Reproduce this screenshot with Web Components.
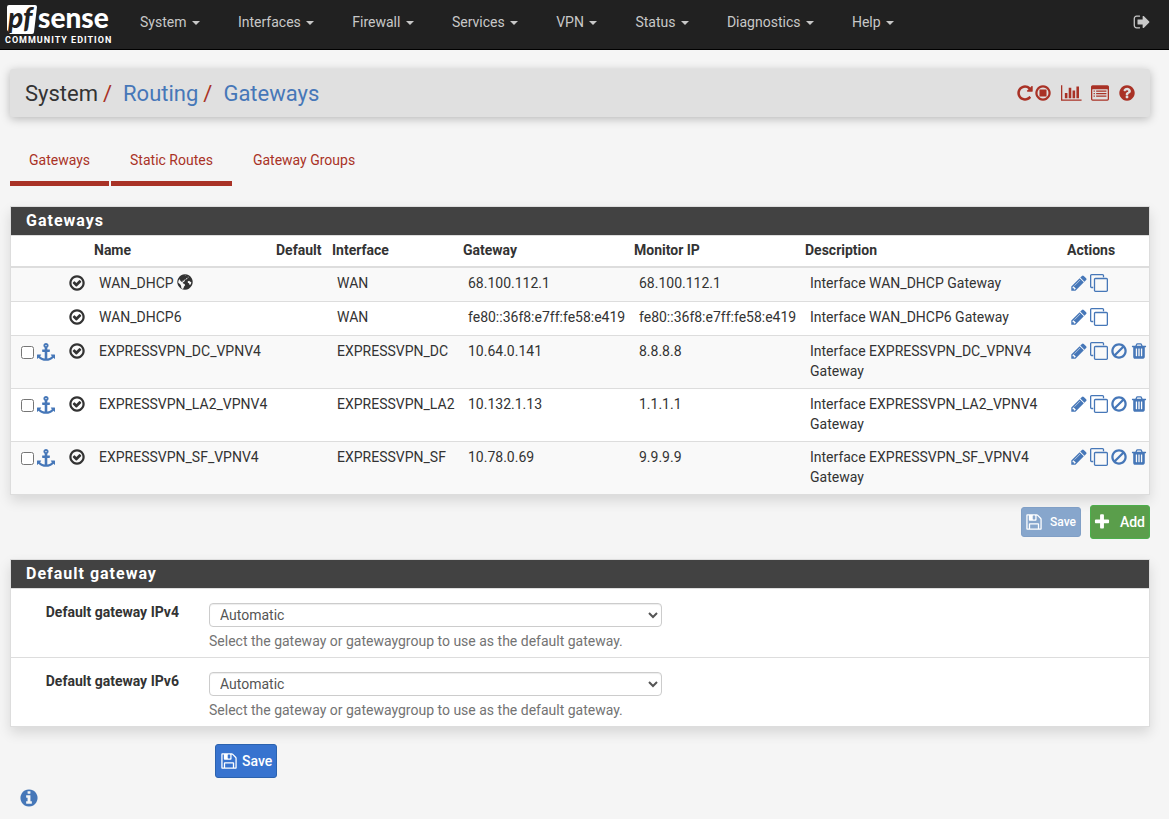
<!DOCTYPE html>
<html lang="en">
<head>
<meta charset="utf-8">
<title>System: Routing: Gateways</title>
<style>
  body { margin: 0; background: #f5f5f5; color: #333; font: 14px/20px Roboto, sans-serif; }
</style>
</head>
<body>
<pf-page></pf-page>

<script>
const RING = 'M1664 896q0 209-103 385.5t-279.5 279.5-385.5 103-385.5-103-279.5-279.5-103-385.5 103-385.5 279.5-279.5 385.5-103 385.5 103 279.5 279.5 103 385.5z';
const HOLE = 'M1440 896q0-148-73-273t-198-198-273-73-273 73-198 198-73 273 73 273 198 198 273 73 273-73 198-198 73-273z';
const ICONS = {
  repeat: 'M1664 256v448q0 26-19 45t-45 19h-448q-42 0-59-40-17-39 14-69l138-138q-148-137-349-137-104 0-198.5 40.5t-163.5 109.5-109.5 163.5-40.5 198.5 40.5 198.5 109.5 163.5 163.5 109.5 198.5 40.5q119 0 225-52t179-147q7-10 23-12 15 0 25 9l137 138q9 8 9.5 20.5t-7.5 22.5q-109 132-264 204.5t-327 72.5q-156 0-298-61t-245-164-164-245-61-298 61-298 164-245 245-164 298-61q147 0 284.5 55.5t244.5 156.5l130-129q29-31 70-14 39 17 39 59z',
  stop: RING + HOLE + 'M576 544h640q32 0 32 32v640q0 32-32 32h-640q-32 0-32-32v-640q0-32 32-32z',
  chart: 'M640 896v512h-256v-512h256zm384-512v1024h-256v-1024h256zm1024 1152v128h-2048v-1536h128v1408h1920zm-640-896v768h-256v-768h256zm384-384v1152h-256v-1152h256z',
  list: 'M160 128h1472q66 0 113 47t47 113v1216q0 66-47 113t-113 47h-1472q-66 0-113-47t-47-113v-1216q0-66 47-113t113-47zM128 544v960q0 32 32 32h1472q32 0 32-32v-960q0-32-32-32h-1472q-32 0-32 32zM256 640h128v128h-128zM512 640h1024v128h-1024zM256 896h128v128h-128zM512 896h1024v128h-1024zM256 1152h128v128h-128zM512 1152h1024v128h-1024z',
  help: 'M1024 1376v-192q0-14-9-23t-23-9h-192q-14 0-23 9t-9 23v192q0 14 9 23t23 9h192q14 0 23-9t9-23zm256-672q0-88-55.5-163t-138.5-116-170-41q-243 0-371 213-15 24 8 42l132 100q7 6 19 6 16 0 25-12 53-68 86-92 34-24 86-24 48 0 85.5 26t37.5 59q0 38-20 61t-68 45q-63 28-115.5 86.5t-52.5 125.5v36q0 14 9 23t23 9h192q14 0 23-9t9-23q0-19 21.5-49.5t54.5-49.5q32-18 49-28.5t46-35 44.5-48 28-60.5 12.5-81z' + RING,
  info: 'M1152 1376v-160q0-14-9-23t-23-9h-96v-512q0-14-9-23t-23-9h-320q-14 0-23 9t-9 23v160q0 14 9 23t23 9h96v320h-96q-14 0-23 9t-9 23v160q0 14 9 23t23 9h448q14 0 23-9t9-23zm-128-896v-160q0-14-9-23t-23-9h-192q-14 0-23 9t-9 23v160q0 14 9 23t23 9h192q14 0 23-9t9-23z' + RING,
  check: 'M1299 813l-422 422q-19 19-45 19t-45-19l-294-294q-19-19-19-45t19-45l102-102q19-19 45-19t45 19l147 147 275-275q19-19 45-19t45 19l102 102q19 19 19 45t-19 45z' + HOLE + RING,
  globe: RING + 'M860 270l230 30 160 70-50 110-150 20-60 110-130 40-60 130-120-30-50 80 60 70-70 30-190-150-40-150-110 60q-70 130-50 290l180 130 90 170 40 240 120 70 90-60 40-170 120-130-60-130-170-70 30-110 150-90 60-150 140-60 100-120 110-20-80-120-130-60-150-50zM1240 800l-90 80 50 110 100 40 30 120 70 40 90-130 30-170-120-30-90-80z',
  anchor: 'M960 256q0-26-19-45t-45-19-45 19-19 45 19 45 45 19 45-19 19-45zm832 928v352q0 22-20 30-8 2-12 2-13 0-23-9l-93-93q-119 143-318.5 226.5t-429.5 83.5-429.5-83.5-318.5-226.5l-93 93q-9 9-23 9-4 0-12-2-20-8-20-30v-352q0-14 9-23t23-9h352q22 0 30 20 8 19-7 35l-100 100q67 91 189.5 153.5t271.5 82.5v-647h-192q-26 0-45-19t-19-45v-128q0-26 19-45t45-19h192v-163q-58-34-93-92.5t-35-128.5q0-106 75-181t181-75 181 75 75 181q0 70-35 128.5t-93 92.5v163h192q26 0 45 19t19 45v128q0 26-19 45t-45 19h-192v647q149-20 271.5-82.5t189.5-153.5l-100-100q-15-16-7-35 8-20 30-20h352q14 0 23 9t9 23z',
  pencil: 'M491 1536l91-91-235-235-91 91v107h128v128h107zm523-928q0-22-22-22-10 0-17 7l-542 542q-7 7-7 17 0 22 22 22 10 0 17-7l542-542q7-7 7-17zm-54-192l416 416-832 832h-416v-416zm683 96q0 53-37 90l-166 166-416-416 166-165q36-38 90-38 53 0 91 38l235 234q37 39 37 91z',
  clone: 'M1664 1632v-1088q0-13-9.5-22.5t-22.5-9.5h-1088q-13 0-22.5 9.5t-9.5 22.5v1088q0 13 9.5 22.5t22.5 9.5h1088q13 0 22.5-9.5t9.5-22.5zm128-1088v1088q0 66-47 113t-113 47h-1088q-66 0-113-47t-47-113v-1088q0-66 47-113t113-47h1088q66 0 113 47t47 113zm-384-384v160h-128v-160q0-13-9.5-22.5t-22.5-9.5h-1088q-13 0-22.5 9.5t-9.5 22.5v1088q0 13 9.5 22.5t22.5 9.5h160v128h-160q-66 0-113-47t-47-113v-1088q0-66 47-113t113-47h1088q66 0 113 47t47 113z',
  ban: 'M1440 893q0-161-87-295l-754 753q137 89 297 89 111 0 211.5-43.5t173.5-116.5 116-174.5 43-212.5zm-999 299l755-754q-135-91-300-91-148 0-273 73t-198 199-73 274q0 162 89 299zm1223-299q0 157-61 300t-163.5 246-245 164-298.5 61-298.5-61-245-164-163.5-246-61-300 61-299.5 163.5-245.5 245-164 298.5-61 298.5 61 245 164 163.5 245.5 61 299.5z',
  trash: 'M704 1376v-704q0-14-9-23t-23-9h-64q-14 0-23 9t-9 23v704q0 14 9 23t23 9h64q14 0 23-9t9-23zm256 0v-704q0-14-9-23t-23-9h-64q-14 0-23 9t-9 23v704q0 14 9 23t23 9h64q14 0 23-9t9-23zm256 0v-704q0-14-9-23t-23-9h-64q-14 0-23 9t-9 23v704q0 14 9 23t23 9h64q14 0 23-9t9-23zm-544-992h448l-48-117q-7-9-17-11h-317q-10 2-17 11zm928 32v64q0 14-9 23t-23 9h-96v948q0 83-47 143.5t-113 60.5h-832q-66 0-113-58.5t-47-141.5v-952h-96q-14 0-23-9t-9-23v-64q0-14 9-23t23-9h309l70-167q15-37 54-63t79-26h320q40 0 79 26t54 63l70 167h309q14 0 23 9t9 23z',
  save: 'M512 1536h768v-384h-768v384zm896 0h128v-896q0-14-10-38.5t-20-34.5l-281-281q-10-10-34-20t-39-10v416q0 40-28 68t-68 28h-576q-40 0-68-28t-28-68v-416h-128v1280h128v-416q0-40 28-68t68-28h832q40 0 68 28t28 68v416zm-384-928v-320q0-13-9.5-22.5t-22.5-9.5h-192q-13 0-22.5 9.5t-9.5 22.5v320q0 13 9.5 22.5t22.5 9.5h192q13 0 22.5-9.5t9.5-22.5zm640 32v928q0 40-28 68t-68 28h-1344q-40 0-68-28t-28-68v-1344q0-40 28-68t68-28h928q40 0 88 20t76 48l280 280q28 28 48 76t20 88z',
  plus: 'M1600 736v192q0 40-28 68t-68 28h-416v416q0 40-28 68t-68 28h-192q-40 0-68-28t-28-68v-416h-416q-40 0-68-28t-28-68v-192q0-40 28-68t68-28h416v-416q0-40 28-68t68-28h192q40 0 68 28t28 68v416h416q40 0 68 28t28 68z',
  signout: 'M704 1440q0 4 1 20t.5 26.5-3 23.5-10 19.5-20.5 6.5h-320q-119 0-203.5-84.5t-84.5-203.5v-704q0-119 84.5-203.5t203.5-84.5h320q13 0 22.5 9.5t9.5 22.5q0 4 1 20t.5 26.5-3 23.5-10 19.5-20.5 6.5h-320q-66 0-113 47t-47 113v704q0 66 47 113t113 47h312l11.5 1 11.5 3 8 5.5 7 9 2 13.5zm928-544q0 26-19 45l-544 544q-19 19-45 19t-45-19-19-45v-288h-448q-26 0-45-19t-19-45v-384q0-26 19-45t45-19h448v-288q0-26 19-45t45-19 45 19l544 544q19 19 19 45z'
};

/* Attaches an open shadow root filled with the given styles and markup. */
function render(el, css, html) {
  if (!el.shadowRoot) el.attachShadow({ mode: 'open' });
  el.shadowRoot.innerHTML = `<style>*{box-sizing:border-box}a{text-decoration:none}${css}</style>${html}`;
}

customElements.define('pf-icon', class extends HTMLElement {
  connectedCallback() {
    const name = this.getAttribute('name');
    const w = name === 'chart' ? 2048 : 1792;
    render(this, `
      :host { display: block; height: 18px; flex: none; }
      svg { display: block; height: 100%; fill: currentColor; fill-rule: evenodd; }`,
      `<svg viewBox="0 0 ${w} 1792" aria-hidden="true"><path d="${ICONS[name]}"/></svg>`);
  }
});

customElements.define('pf-logo', class extends HTMLElement {
  connectedCallback() {
    render(this, `
      :host { display: block; }
      a, svg { display: block; }
      text { font-family: Lato, sans-serif; font-weight: 900; }
      .edition { font: 700 9px Roboto, sans-serif; letter-spacing: 1px; }`,
      `<a href="#" aria-label="Home"><svg width="116" height="49" viewBox="0 0 116 49">
        <path d="M9 5h26q2 0 2 2l-3 25q0 2-2 2H10L7 30V7q0-2 2-2z" fill="#fff"/>
        <text x="8" y="28" font-size="28" font-style="italic" fill="#212121">pf</text>
        <text x="38" y="28" font-size="28" fill="#fff">sense</text>
        <text class="edition" x="5" y="43" fill="#fff">COMMUNITY EDITION</text>
      </svg></a>`);
  }
});

customElements.define('pf-nav-item', class extends HTMLElement {
  connectedCallback() {
    render(this, `
      :host { display: block; }
      a { display: block; padding: 12px 19px 17px; color: #c8c8c8; white-space: nowrap; }
      i { display: inline-block; vertical-align: middle; margin-left: 2px; border: 4px solid transparent; border-top-color: currentColor; border-bottom: 0; }`,
      `<a href="#"><slot></slot> <i></i></a>`);
  }
});

customElements.define('pf-navbar', class extends HTMLElement {
  connectedCallback() {
    const items = ['System', 'Interfaces', 'Firewall', 'Services', 'VPN', 'Status', 'Diagnostics', 'Help'];
    render(this, `
      :host { display: block; background: #212121; border-bottom: 1px solid #000; }
      nav { display: flex; align-items: flex-start; }
      pf-logo { width: 121px; }
      .out { margin-left: auto; padding: 13px 18px 0 0; color: #c8c8c8; }`,
      `<nav><pf-logo></pf-logo>${items.map(t => `<pf-nav-item>${t}</pf-nav-item>`).join('')}
       <a class="out" href="#" aria-label="Log out"><pf-icon name="signout"></pf-icon></a></nav>`);
  }
});

customElements.define('pf-header', class extends HTMLElement {
  connectedCallback() {
    render(this, `
      :host { display: flex; align-items: center; justify-content: space-between; padding: 10px 14px 8px 15px;
        background: #e0e0e0; border-radius: 3px; box-shadow: 0 2px 10px rgba(0,0,0,.25); }
      ol { display: flex; margin: 0; padding: 0; list-style: none; font-size: 22px; line-height: 30px; }
      li + li::before { content: "/"; color: #a93226; padding: 0 11px 0 5px; }
      ol a { color: #4677b8; }
      .tools { display: flex; align-items: center; padding-bottom: 2px; color: #a93226; }
      .tools a { display: block; color: inherit; }
      .chart, .list, .help { margin-left: 9px; }`,
      `<ol><li>System</li><li><a href="#">Routing</a></li><li><a href="#">Gateways</a></li></ol>
       <div class="tools">
         <a href="#" aria-label="Restart service"><pf-icon name="repeat"></pf-icon></a>
         <a href="#" aria-label="Stop service"><pf-icon name="stop"></pf-icon></a>
         <a href="#" class="chart" aria-label="Monitoring"><pf-icon name="chart"></pf-icon></a>
         <a href="#" class="list" aria-label="Log entries"><pf-icon name="list"></pf-icon></a>
         <a href="#" class="help" aria-label="Help"><pf-icon name="help"></pf-icon></a>
       </div>`);
  }
});

customElements.define('pf-tabs', class extends HTMLElement {
  connectedCallback() {
    render(this, `
      :host { display: flex; gap: 2px; }
      a { padding: 9px 19px 11px; border-bottom: 5px solid transparent; color: #a93226; }
      a.on { border-color: #a93226; }`,
      `<a class="on" href="#">Gateways</a><a class="on" href="#">Static Routes</a><a href="#">Gateway Groups</a>`);
  }
});

customElements.define('pf-panel', class extends HTMLElement {
  connectedCallback() {
    render(this, `
      :host { display: block; background: #fff; border: 1px solid #ddd; box-shadow: 0 6px 12px rgba(0,0,0,.12); }
      h2 { margin: 0; padding: 4px 15px; background: #424242; color: #fff; font: 700 16px/20px Roboto, sans-serif; letter-spacing: 1px; }`,
      `<h2>${this.getAttribute('heading')}</h2><slot></slot>`);
  }
});

customElements.define('pf-gateways', class extends HTMLElement {
  connectedCallback() {
    const rows = [
      ['WAN_DHCP', 'WAN', '68.100.112.1', '68.100.112.1', true],
      ['WAN_DHCP6', 'WAN', 'fe80::36f8:e7ff:fe58:e419', 'fe80::36f8:e7ff:fe58:e419', true],
      ['EXPRESSVPN_DC_VPNV4', 'EXPRESSVPN_DC', '10.64.0.141', '8.8.8.8'],
      ['EXPRESSVPN_LA2_VPNV4', 'EXPRESSVPN_LA2', '10.132.1.13', '1.1.1.1'],
      ['EXPRESSVPN_SF_VPNV4', 'EXPRESSVPN_SF', '10.78.0.69', '9.9.9.9']
    ];
    const act = (icon, label) => `<a href="#" aria-label="${label}"><pf-icon name="${icon}"></pf-icon></a>`;
    const row = ([name, iface, gw, mon, fixed], i) => `<tr>
      <td>${fixed ? '' : `<div class="pick"><input type="checkbox" aria-label="Select ${name}">${act('anchor', 'Move')}</div>`}</td>
      <td class="state"><pf-icon name="check"></pf-icon></td>
      <td><span class="name">${name}${i === 0 ? '<pf-icon name="globe"></pf-icon>' : ''}</span></td>
      <td></td><td>${iface}</td><td>${gw}</td><td>${mon}</td>
      <td>Interface ${name} Gateway</td>
      <td class="act"><div class="actions">${act('pencil', 'Edit')}${act('clone', 'Copy')}${fixed ? '' : act('ban', 'Disable') + act('trash', 'Delete')}</div></td></tr>`;
    render(this, `
      :host { display: block; border-top: 1px solid #ddd; }
      table { width: 100%; table-layout: fixed; border-collapse: separate; border-spacing: 0; }
      th { padding: 4px 5px 6px; text-align: left; font-weight: 700; border-bottom: 2px solid #ddd; }
      td { padding: 5px 10px 7px; height: 34px; vertical-align: top; border-bottom: 1px solid #ddd; }
      tr:last-child td { border-bottom: 0; }
      tbody tr:nth-child(odd) { background: #f9f9f9; }
      a { color: #4677b8; }
      td.state { padding: 6px 0 0 1px; }
      td.act { padding: 6px 0 0 8px; }
      .name { display: flex; gap: 2px; }
      .pick { display: flex; align-items: center; gap: 3px; padding-top: 2px; }
      input { width: 13px; height: 13px; margin: 0; }
      .pick a, .actions a { display: block; }
      .actions { display: flex; gap: 2px; }
      .c1{width:56px}.c2{width:22px}.c3{width:182px}.c4{width:56px}.c5{width:131px}.c6,.c7{width:171px}.c9{width:87px}`,
      `<table><colgroup><col class="c1"><col class="c2"><col class="c3"><col class="c4"><col class="c5"><col class="c6"><col class="c7"><col><col class="c9"></colgroup>
       <thead><tr><th></th><th></th><th>Name</th><th>Default</th><th>Interface</th><th>Gateway</th><th>Monitor IP</th><th>Description</th><th>Actions</th></tr></thead>
       <tbody>${rows.map(row).join('')}</tbody></table>`);
  }
});

customElements.define('pf-button', class extends HTMLElement {
  connectedCallback() {
    render(this, `
      :host { display: block; }
      button { display: flex; align-items: center; gap: 4px; height: 34px; padding: 0 4px 1px; border: 1px solid #2b62ae; border-radius: 3px;
        background: #3773cf; color: #fff; font: 500 14px/20px Roboto, sans-serif; }
      :host([kind=add]) button { gap: 9px; padding: 0 4px 1px 2px; background: #5a9e4b; border-color: #4cae4c; }
      :host([kind=small]) button { height: 30px; gap: 7px; padding: 0 4px 0 3px; font-size: 12px; background: #87a6cc; border-color: #809fc6; }`,
      `<button type="button"${this.getAttribute('kind') === 'small' ? ' disabled' : ''}><pf-icon name="${this.getAttribute('icon')}"></pf-icon><span><slot></slot></span></button>`);
  }
});

customElements.define('pf-select-row', class extends HTMLElement {
  connectedCallback() {
    render(this, `
      :host { display: grid; grid-template-columns: 168px minmax(0, 453px); column-gap: 30px; padding: 13px 0 6px; border-top: 1px solid #ddd; }
      label { text-align: right; font-weight: 700; }
      select { display: block; width: 100%; height: 24px; margin: 1px 0 4px; padding: 0 6px; border: 1px solid #ccc; border-radius: 4px; background: #fff; color: #555;
        font: 14px Roboto, sans-serif; box-shadow: inset 0 1px 1px rgba(0,0,0,.075); }
      p { margin: 0; color: #737373; }`,
      `<label for="s">${this.getAttribute('label')}</label>
       <div><select id="s"><option>Automatic</option></select><p>Select the gateway or gatewaygroup to use as the default gateway.</p></div>`);
  }
});

customElements.define('pf-page', class extends HTMLElement {
  connectedCallback() {
    render(this, `
      :host { display: block; }
      main { display: flex; flex-direction: column; padding: 19px 19px 0 10px; }
      pf-tabs { margin: 24px 0 20px; }
      .buttons { display: flex; align-items: center; justify-content: flex-end; gap: 9px; padding: 10px 0 20px; }
      .submit { padding: 17px 205px 10px; display: flex; }
      .info { align-self: flex-start; margin-left: 9px; color: #4677b8; }
      .info pf-icon { height: 20px; }`,
      `<pf-navbar></pf-navbar>
       <main>
         <pf-header></pf-header>
         <pf-tabs></pf-tabs>
         <pf-panel heading="Gateways"><pf-gateways></pf-gateways></pf-panel>
         <div class="buttons"><pf-button kind="small" icon="save">Save</pf-button><pf-button kind="add" icon="plus">Add</pf-button></div>
         <pf-panel heading="Default gateway">
           <pf-select-row label="Default gateway IPv4"></pf-select-row>
           <pf-select-row label="Default gateway IPv6"></pf-select-row>
         </pf-panel>
         <div class="submit"><pf-button icon="save">Save</pf-button></div>
         <a class="info" href="#" aria-label="Information"><pf-icon name="info"></pf-icon></a>
       </main>`);
  }
});
</script>
</body>
</html>
